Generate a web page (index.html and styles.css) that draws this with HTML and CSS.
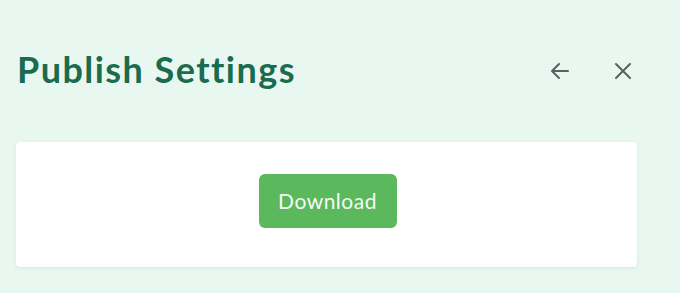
FILE: index.html
```html
<!DOCTYPE html>
<html>
<head>
<meta charset="utf-8">
<link rel="stylesheet" href="styles.css">
</head>
<body>
<div class="panel">
  <header class="head">
    <h1 class="title">Publish Settings</h1>
    <div class="actions">
      <button class="icon-btn" aria-label="Back">
        <svg width="20" height="18" viewBox="0 0 20 18" fill="none" stroke="#59625e" stroke-width="2" stroke-linecap="round" stroke-linejoin="round"><path d="M18 9H2M9 2L2 9l7 7"/></svg>
      </button>
      <button class="icon-btn" aria-label="Close">
        <svg width="18" height="18" viewBox="0 0 18 18" fill="none" stroke="#59625e" stroke-width="2" stroke-linecap="round"><path d="M2 2l14 14M16 2L2 16"/></svg>
      </button>
    </div>
  </header>
  <section class="card">
    <button class="download">Download</button>
  </section>
</div>
</body>
</html>
```
FILE: styles.css
```css
html, body {
  margin: 0;
  padding: 0;
  background: #e8f8f1;
  width: 680px;
  height: 293px;
  overflow: hidden;
  font-family: "Lato", "Noto Sans", sans-serif;
}
.panel {
  padding: 0 43px 0 16px;
}
.head {
  display: flex;
  align-items: center;
  justify-content: space-between;
  height: 142px;
  box-sizing: border-box;
}
.title {
  margin: 0 0 5px 1px;
  font-size: 36px;
  font-weight: 700;
  color: #1b6b4e;
  letter-spacing: 1.45px;
}
.actions {
  display: flex;
  align-items: center;
  gap: 44px;
  margin-right: 5px;
  margin-bottom: 1px;
}
.icon-btn {
  background: none;
  border: 0;
  padding: 0;
  display: flex;
  align-items: center;
}
.card {
  background: #ffffff;
  border-radius: 4px;
  height: 125px;
  box-shadow: 0 1px 3px rgba(120, 190, 160, 0.25);
  display: flex;
  align-items: center;
  justify-content: center;
}
.download {
  background: #5cb85c;
  color: #f4fbf4;
  border: 0;
  border-radius: 6px;
  width: 138px;
  height: 54px;
  font-family: "Lato", "Noto Sans", sans-serif;
  font-size: 21px;
  letter-spacing: 0.5px;
  margin-left: 2px;
  margin-bottom: 8px;
}
```
